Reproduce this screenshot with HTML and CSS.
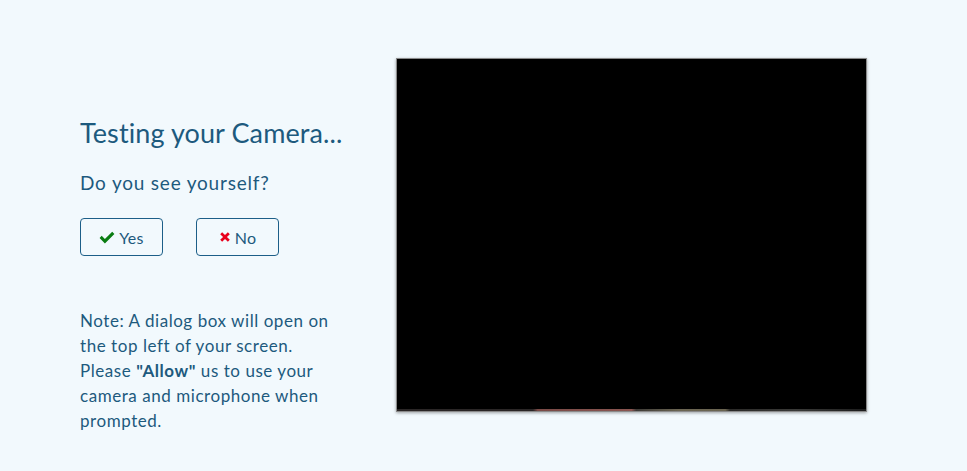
FILE: index.html
```html
<!DOCTYPE html>
<html lang="en">
<head>
<meta charset="utf-8">
<title>Testing your Camera</title>
<link rel="stylesheet" href="styles.css">
</head>
<body>
<main class="page">
  <section class="info">
    <h1 class="title">Testing your Camera...</h1>
    <p class="question">Do you see yourself?</p>
    <div class="actions">
      <button class="btn" type="button">
        <svg class="icon" viewBox="0 0 16 13" width="16" height="13" aria-hidden="true"><path d="M0.6 6.9 L2.7 4.8 L5.9 8 L13.2 0.7 L15.4 2.9 L5.9 12.4 Z" fill="#0a7d12"/></svg>
        Yes
      </button>
      <button class="btn" type="button">
        <svg class="icon" viewBox="0 0 16 16" width="12" height="12" aria-hidden="true"><path d="M1.6 4.2 L4.2 1.6 L8 5.4 L11.8 1.6 L14.4 4.2 L10.6 8 L14.4 11.8 L11.8 14.4 L8 10.6 L4.2 14.4 L1.6 11.8 L5.4 8 Z" fill="#e8001c"/></svg>
        No
      </button>
    </div>
    <p class="note">Note: A dialog box will open on the top left of your screen. Please <strong>"Allow"</strong> us to use your camera and microphone when prompted.</p>
  </section>
  <section class="preview">
    <div class="video">
      <div class="video-frame"></div>
      <div class="video-edge"></div>
    </div>
  </section>
</main>
</body>
</html>
```
FILE: styles.css
```css
* { box-sizing: border-box; }
html, body { margin: 0; padding: 0; }
body {
  background: #f2f9fd;
  font-family: "Lato", "Open Sans", sans-serif;
  color: #1d5a7e;
  width: 967px;
  height: 471px;
  overflow: hidden;
}
.page {
  display: flex;
  padding: 58px 0 0 80px;
}
.info {
  width: 316px;
  padding-top: 58px;
}
.title {
  margin: 0;
  font-size: 27px;
  font-weight: 400;
  line-height: 34px;
  letter-spacing: 0.1px;
}
.question {
  margin: 20px 0 0;
  font-size: 19px;
  line-height: 26px;
  letter-spacing: 0.8px;
}
.actions {
  display: flex;
  gap: 33px;
  margin-top: 22px;
}
.btn {
  width: 83px;
  height: 38px;
  display: flex;
  align-items: center;
  justify-content: center;
  gap: 4px;
  background: transparent;
  border: 1px solid #1d5f88;
  border-radius: 4px;
  color: #1d5a7e;
  font-family: inherit;
  font-size: 16px;
  letter-spacing: 0.3px;
  padding: 0;
}
.icon { display: block; }
.note {
  margin: 52px 0 0;
  width: 262px;
  font-size: 17px;
  line-height: 25px;
  letter-spacing: 0.55px;
}
.note strong { font-weight: 700; }
.video {
  width: 471px;
  height: 354px;
  background: #000;
  border: 1px solid #8a8a8a;
  box-shadow: 0 1px 3px rgba(0,0,0,0.35);
  display: flex;
  flex-direction: column;
}
.video-frame {
  flex: 1;
  background: #000;
}
.video-edge {
  height: 2px;
  background: linear-gradient(90deg, #2a2626 0%, #2a2626 29%, #7a4a46 30%, #8a5550 50%, #3d3a36 51%, #6b6552 60%, #6a6450 70%, #2b2a28 71%, #3a3a38 85%, #1c1c1c 100%);
}
```
